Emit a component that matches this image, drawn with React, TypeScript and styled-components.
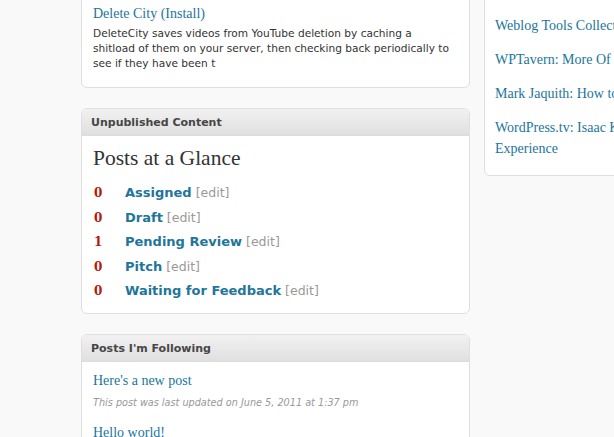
import styled, { createGlobalStyle } from "styled-components";

const GlobalStyle = createGlobalStyle`
  html, body {
    margin: 0;
    padding: 0;
    background: #f9f9f9;
    overflow: hidden;
  }
  body {
    width: 614px;
    height: 437px;
  }
`;

const Page = styled.div`
  display: flex;
  align-items: flex-start;
  gap: 14px;
  padding-left: 81px;
  margin-top: -44px;
  width: 800px;
`;

const Column = styled.div<{ $width: number }>`
  width: ${(p) => p.$width}px;
  flex-shrink: 0;
  display: flex;
  flex-direction: column;
  gap: 20px;
`;

const Box = styled.div`
  background: #fff;
  border: 1px solid #dfdfdf;
  border-radius: 6px;
  overflow: hidden;
`;

const BoxHeader = styled.h3`
  margin: 0;
  height: 26px;
  line-height: 27px;
  padding: 0 9px;
  font-family: "DejaVu Sans", sans-serif;
  font-size: 11px;
  font-weight: bold;
  color: #464646;
  background: linear-gradient(#f1f1f1, #e0e0e0);
  border-bottom: 1px solid #dcdcdc;
`;

const BoxBody = styled.div<{ $pad?: string }>`
  padding: ${(p) => p.$pad ?? "10px 11px"};
`;

const SerifLink = styled.a<{ $gap?: number }>`
  display: block;
  margin-top: ${(p) => p.$gap ?? 0}px;
  font-family: "Liberation Serif", Georgia, serif;
  font-size: 14px;
  color: #21759b;
  text-decoration: none;
  line-height: 20px;
`;

const Description = styled.p`
  margin: 2px 0 0;
  padding-right: 7px;
  font-family: "DejaVu Sans", sans-serif;
  font-size: 10.6px;
  line-height: 15px;
  color: #333;
`;

const GlanceTitle = styled.h4`
  margin: 0 0 14px;
  font-family: "Liberation Serif", Georgia, serif;
  font-weight: normal;
  font-size: 21.5px;
  color: #333;
  line-height: 26px;
`;

const StatusList = styled.ul`
  list-style: none;
  margin: 0;
  padding: 0;
`;

const StatusRow = styled.li`
  display: flex;
  align-items: baseline;
  height: 24.5px;
`;

const Count = styled.span`
  width: 31px;
  padding-left: 1px;
  font-family: "DejaVu Serif", Georgia, serif;
  font-weight: bold;
  font-size: 12px;
  color: #b41a0b;
`;

const StatusName = styled.a`
  font-family: "DejaVu Sans", sans-serif;
  font-weight: bold;
  font-size: 13px;
  color: #21759b;
  text-decoration: none;
`;

const EditLink = styled.a`
  margin-left: 4px;
  font-family: "DejaVu Sans", sans-serif;
  font-size: 12.5px;
  color: #999;
  text-decoration: none;
`;

const PostMeta = styled.p`
  margin: 6px 0 15px;
  font-family: "DejaVu Sans", sans-serif;
  font-style: italic;
  font-size: 9.7px;
  color: #999;
`;

const FeedList = styled.div`
  display: flex;
  flex-direction: column;
  gap: 13px;
  padding: 24px 10px 16px;
  white-space: nowrap;
`;

const FeedLink = styled.a`
  display: block;
  font-family: "Liberation Serif", Georgia, serif;
  font-size: 14px;
  line-height: 21px;
  color: #21759b;
  text-decoration: none;
`;

const statuses = [
  { count: 0, name: "Assigned" },
  { count: 0, name: "Draft" },
  { count: 1, name: "Pending Review" },
  { count: 0, name: "Pitch" },
  { count: 0, name: "Waiting for Feedback" },
];

export default function App() {
  return (
    <>
      <GlobalStyle />
      <Page>
        <Column $width={389}>
          <Box>
            <BoxBody $pad="6px 11px 16px">
              <SerifLink href="#">Google Tag Manager (Install)</SerifLink>
              <Description>Adds tracking code to every page.</Description>
              <SerifLink href="#" $gap={4}>
                Delete City (Install)
              </SerifLink>
              <Description>
                DeleteCity saves videos from YouTube deletion by caching a
                shitload of them on your server, then checking back periodically
                to see if they have been t
              </Description>
            </BoxBody>
          </Box>
          <Box>
            <BoxHeader>Unpublished Content</BoxHeader>
            <BoxBody $pad="9px 11px 5px">
              <GlanceTitle>Posts at a Glance</GlanceTitle>
              <StatusList>
                {statuses.map((s) => (
                  <StatusRow key={s.name}>
                    <Count>{s.count}</Count>
                    <StatusName href="#">{s.name}</StatusName>
                    <EditLink href="#">[edit]</EditLink>
                  </StatusRow>
                ))}
              </StatusList>
            </BoxBody>
          </Box>
          <Box>
            <BoxHeader>Posts I'm Following</BoxHeader>
            <BoxBody $pad="9px 11px">
              <SerifLink href="#">Here's a new post</SerifLink>
              <PostMeta>This post was last updated on June 5, 2011 at 1:37 pm</PostMeta>
              <SerifLink href="#">Hello world!</SerifLink>
              <PostMeta>This post was last updated on June 1, 2011 at 9:12 am</PostMeta>
            </BoxBody>
          </Box>
        </Column>
        <Column $width={300}>
          <Box>
            <FeedList>
              <FeedLink href="#">WordPress Planet</FeedLink>
              <FeedLink href="#">Weblog Tools Collection: WordPress Plugin Releases</FeedLink>
              <FeedLink href="#">WPTavern: More Of The Same</FeedLink>
              <FeedLink href="#">Mark Jaquith: How to make your plugins faster</FeedLink>
              <FeedLink href="#">
                WordPress.tv: Isaac Keyet: The WordPress Mobile
                <br />
                Experience
              </FeedLink>
            </FeedList>
          </Box>
        </Column>
      </Page>
    </>
  );
}
